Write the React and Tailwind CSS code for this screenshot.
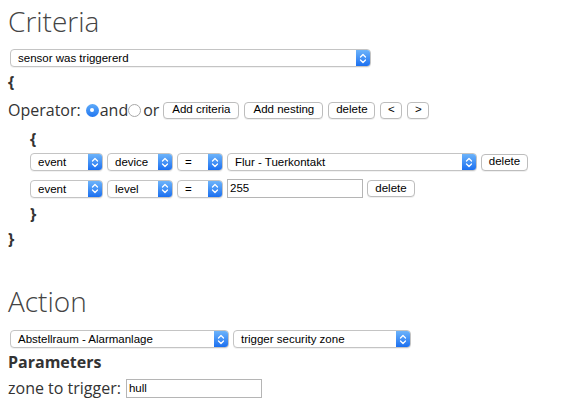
import React from "react"

const ctl = "font-['Liberation_Sans',Arial,sans-serif] text-[11.5px] text-black"

const Select = ({ value, width }) => {
    return (
        <div className={`${ctl} ${width} h-[18px] flex flex-row items-stretch bg-white border border-[#c4c4c4] rounded-[4px] shrink-0 overflow-hidden shadow-[0_1px_0_rgba(0,0,0,0.05)]`}>
            <div className="flex-1 pl-[7px] leading-[16px] whitespace-nowrap overflow-hidden">{value}</div>
            <div className="w-[14px] flex items-center justify-center bg-gradient-to-b from-[#6cb3fa] to-[#1a6ff0]">
                <svg width="8" height="11" viewBox="0 0 8 11" fill="none" stroke="white" strokeWidth="1.3" strokeLinecap="round" strokeLinejoin="round">
                    <path d="M1.5 4 L4 1.5 L6.5 4" />
                    <path d="M1.5 7 L4 9.5 L6.5 7" />
                </svg>
            </div>
        </div>
    )
}

const Button = ({ children, width }) => {
    return (
        <div className={`${ctl} ${width} h-[17px] flex items-center justify-center bg-white border border-[#bdbdbd] rounded-[4px] shrink-0 shadow-[0_1px_0_rgba(0,0,0,0.06)]`}>
            {children}
        </div>
    )
}

const Input = ({ value, width }) => {
    return (
        <div className={`${ctl} ${width} h-[19px] leading-[17px] pl-[2px] bg-white border border-[#b5b5b5] shrink-0`}>
            {value}
        </div>
    )
}

const Radio = ({ checked }) => {
    if (checked) {
        return (
            <div className="w-[13px] h-[13px] rounded-full bg-gradient-to-b from-[#5eaaf9] to-[#1f76f0] flex items-center justify-center shrink-0">
                <div className="w-[4px] h-[4px] rounded-full bg-white" />
            </div>
        )
    }
    return <div className="w-[13px] h-[13px] rounded-full bg-white border border-[#a8a8a8] shrink-0" />
}

const Brace = ({ children, indent }) => {
    return <div className={`font-bold h-[24px] leading-[24px] ${indent}`}>{children}</div>
}

const App = () => {
    return (
        <div className="w-[564px] h-[411px] bg-white px-2 font-['Open_Sans',sans-serif] text-[16px] text-[#333] overflow-hidden">

            <h1 className="text-[28px] font-light leading-[40px] text-[#444] mt-[1px]">Criteria</h1>

            <div className="mt-[8px] pl-[2px]">
                <Select value="sensor was triggererd" width="w-[361px]" />
            </div>

            <Brace indent="mt-[3px]">{"{"}</Brace>

            <div className="flex flex-row items-center h-[24px] mt-[4px]">
                <span>Operator:</span>
                <div className="ml-[5px]"><Radio checked /></div>
                <span className="ml-[1px]">and</span>
                <Radio />
                <span className="ml-[2px]">or</span>
                <div className="flex flex-row gap-[5px] ml-[4px]">
                    <Button width="w-[76px]">Add criteria</Button>
                    <Button width="w-[79px]">Add nesting</Button>
                    <Button width="w-[47px]">delete</Button>
                    <Button width="w-[22px]">&lt;</Button>
                    <Button width="w-[22px]">&gt;</Button>
                </div>
            </div>

            <Brace indent="pl-[22px] mt-[5px]">{"{"}</Brace>

            <div className="pl-[22px] mt-[2px] flex flex-col gap-[8px]">
                <div className="flex flex-row items-center gap-[4px]">
                    <Select value="event" width="w-[73px]" />
                    <Select value="device" width="w-[66px]" />
                    <Select value="=" width="w-[46px]" />
                    <Select value="Flur - Tuerkontakt" width="w-[250px]" />
                    <Button width="w-[47px]">delete</Button>
                </div>
                <div className="flex flex-row items-center gap-[4px]">
                    <Select value="event" width="w-[73px]" />
                    <Select value="level" width="w-[66px]" />
                    <Select value="=" width="w-[46px]" />
                    <Input value="255" width="w-[136px]" />
                    <Button width="w-[48px]">delete</Button>
                </div>
            </div>

            <Brace indent="pl-[22px] mt-[4px]">{"}"}</Brace>
            <Brace indent="mt-[1px]">{"}"}</Brace>

            <h1 className="text-[28px] font-light leading-[40px] text-[#444] mt-[30px]">Action</h1>

            <div className="mt-[9px] pl-[2px] flex flex-row gap-[4px]">
                <Select value="Abstellraum - Alarmanlage" width="w-[219px]" />
                <Select value="trigger security zone" width="w-[178px]" />
            </div>

            <div className="font-bold h-[24px] leading-[24px] mt-[2px]">Parameters</div>

            <div className="flex flex-row items-center h-[24px] mt-[2px]">
                <span>zone to trigger:</span>
                <div className="ml-[5px]">
                    <Input value="hull" width="w-[136px]" />
                </div>
            </div>
        </div>
    )
}

export default App
